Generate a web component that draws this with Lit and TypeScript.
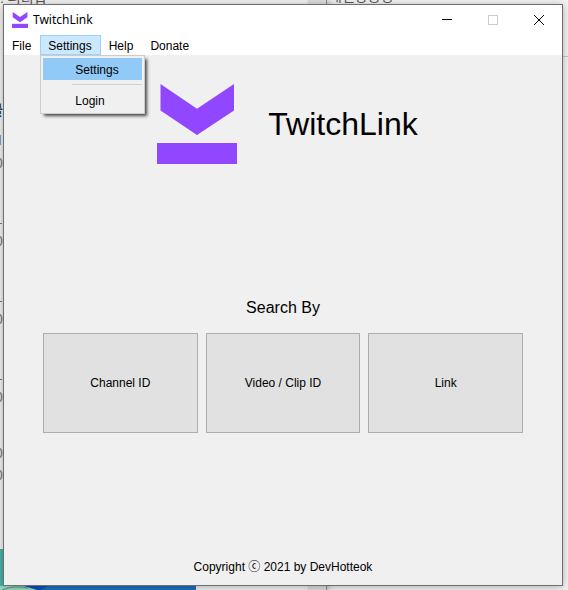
import { LitElement, html, css, svg } from "lit";
import { customElement } from "lit/decorators.js";

@customElement("app-logo")
class AppLogo extends LitElement {
  static styles = css`
    :host { display: block; }
    svg { display: block; width: 100%; height: 100%; fill: #9147ff; }
  `;
  render() {
    return html`<svg viewBox="0 0 80 80" aria-hidden="true">
      <path d="M3.5 0 L40 24.7 L77 0 V26.5 L40 51 L3.5 26.5 Z" />
      <rect x="0" y="59" width="80" height="21" />
    </svg>`;
  }
}

@customElement("desktop-backdrop")
class DesktopBackdrop extends LitElement {
  static styles = css`
    :host { display: block; overflow: hidden; background: #f4f4f4; }
    .pane {
      position: absolute;
      inset: 0 auto 0 0;
      width: 326px;
      border-right: 1px solid #909090;
      background: linear-gradient(to right, #f2f2f2 307px, #dedede 308px);
      box-shadow: 0 0 8px rgba(0, 0, 0, 0.4);
    }
    .text { position: absolute; color: #555; font: 14px/16px "Liberation Sans", "Noto Sans CJK KR", sans-serif; white-space: nowrap; }
    .top-left { left: 0; top: -10px; }
    .top-right { left: 329px; top: -12px; }
    .edge { left: -5px; color: #777; }
    .bold { left: -10px; color: #333; font-weight: 700; }
    .mark { position: absolute; left: 0; width: 2px; height: 1px; background: #777; }
    .link { height: 10px; width: 1px; background: #7d9fc8; }
    .rule { position: absolute; right: 0; top: 56px; width: 5px; height: 1px; background: #c8c8c8; }
    .art { position: absolute; left: 0; bottom: 0; width: 196px; height: 41px; }
  `;
  render() {
    return html`
      <div class="pane"></div>
      <div class="text top-left">! 퍼티법</div>
      <div class="text top-right">개인방송정</div>
      <div class="text bold" style="top:102px">물</div>
      <div class="mark link" style="top:135px"></div>
      ${[163, 241, 319, 397, 453, 475].map(
        (y) => html`<div class="text edge" style="top:${y - 8}px">0</div>`
      )}
      ${[223, 301, 379].map((y) => html`<div class="mark" style="top:${y}px"></div>`)}
      <div class="rule"></div>
      <svg class="art" viewBox="0 0 196 41" aria-hidden="true">
        ${svg`<rect width="196" height="41" fill="#1f6fc0" />
        <path d="M0 0 H4 V36 L28 37 L20 41 H0 Z" fill="#45b5ab" />
        <path d="M0 37 H28 L39 41 H0 Z" fill="#9ad8c4" />
        <path d="M2 41 Q14 36 28 39" fill="none" stroke="#4c9d91" />
        <path d="M24 37 H48 L41 41 H37 Z" fill="#0c50c0" />`}
      </svg>
    `;
  }
}

@customElement("app-root")
class AppRoot extends LitElement {
  static styles = css`
    :host {
      position: relative;
      display: grid;
      box-sizing: border-box;
      min-height: 100vh;
      padding: 4px 5px 4px 3px;
      color: #000;
      font: 12px/16px "Liberation Sans", "Noto Sans CJK KR", sans-serif;
    }
    * { box-sizing: border-box; }
    button { margin: 0; padding: 0; border: 0; background: none; color: inherit; font: inherit; }
    desktop-backdrop { position: absolute; inset: 0; }
    .window {
      position: relative;
      display: flex;
      flex-direction: column;
      border: 1px solid #6e6e6e;
      background: #f0f0f0;
      box-shadow: 0 1px 8px rgba(0, 0, 0, 0.3);
    }
    .titlebar { display: flex; align-items: center; height: 30px; padding-left: 8px; background: #fff; }
    .titlebar app-logo { width: 16px; height: 16px; }
    .caption { flex: 1; padding-left: 5px; font-family: "Noto Sans", sans-serif; }
    .control { display: grid; place-items: center; width: 46px; height: 30px; }
    .control svg { width: 12px; height: 12px; fill: none; stroke: #000; }
    .control:disabled svg { stroke: #ccc; }
    .menubar { display: flex; height: 20px; background: #fff; }
    .menu { position: relative; }
    .menu > button { height: 20px; padding: 2px 8px 0 7px; border: 1px solid transparent; }
    .menu > .open { border-color: #99d1ff; background: #cce8ff; }
    .popup {
      position: absolute;
      left: 0;
      top: 20px;
      z-index: 1;
      display: flex;
      flex-direction: column;
      width: 105px;
      padding: 2px;
      border: 1px solid #ccc;
      background: #f0f0f0;
      box-shadow: 3px 3px 3px -1px rgba(0, 0, 0, 0.7);
    }
    .popup button { height: 22px; padding: 2px 0 0 32px; text-align: left; }
    .popup .active { background: #91c9f7; }
    .popup hr { width: 70px; height: 1px; margin: 4px 0 4px auto; border: 0; background: #d0d0d0; }
    main { flex: 1; display: flex; flex-direction: column; padding: 29px 39px 10px; }
    .brand { display: flex; align-items: center; justify-content: center; gap: 31px; padding-left: 9px; }
    .brand app-logo { width: 80px; height: 80px; }
    h1 { margin: 0; font-size: 32px; line-height: 40px; font-weight: 400; }
    .search { flex: 1; display: flex; flex-direction: column; justify-content: center; padding-top: 8px; }
    h2 { margin: 0 0 15px; font-size: 16px; line-height: 20px; font-weight: 400; text-align: center; }
    .choices { display: grid; grid-template-columns: repeat(3, 1fr); gap: 8px; }
    .choices button { height: 100px; border: 1px solid #adadad; background: #e1e1e1; }
    footer { text-align: center; }
  `;

  render() {
    return html`
      <desktop-backdrop></desktop-backdrop>
      <div class="window">
        <header class="titlebar">
          <app-logo></app-logo>
          <span class="caption">TwitchLink</span>
          <button class="control" aria-label="Minimize">
            <svg viewBox="0 0 12 12"><path d="M1 5.5H11" /></svg>
          </button>
          <button class="control" aria-label="Maximize" disabled>
            <svg viewBox="0 0 12 12"><rect x="1.5" y="1.5" width="9" height="9" /></svg>
          </button>
          <button class="control" aria-label="Close">
            <svg viewBox="0 0 12 12"><path d="M1 1L11 11M11 1L1 11" /></svg>
          </button>
        </header>
        <nav class="menubar">
          <div class="menu"><button>File</button></div>
          <div class="menu">
            <button class="open" aria-expanded="true">Settings</button>
            <div class="popup" role="menu">
              <button class="active" role="menuitem">Settings</button>
              <hr />
              <button role="menuitem">Login</button>
            </div>
          </div>
          <div class="menu"><button>Help</button></div>
          <div class="menu"><button>Donate</button></div>
        </nav>
        <main>
          <div class="brand">
            <app-logo></app-logo>
            <h1>TwitchLink</h1>
          </div>
          <section class="search">
            <h2>Search By</h2>
            <div class="choices">
              <button>Channel ID</button>
              <button>Video / Clip ID</button>
              <button>Link</button>
            </div>
          </section>
          <footer>Copyright ⓒ 2021 by DevHotteok</footer>
        </main>
      </div>
    `;
  }
}
